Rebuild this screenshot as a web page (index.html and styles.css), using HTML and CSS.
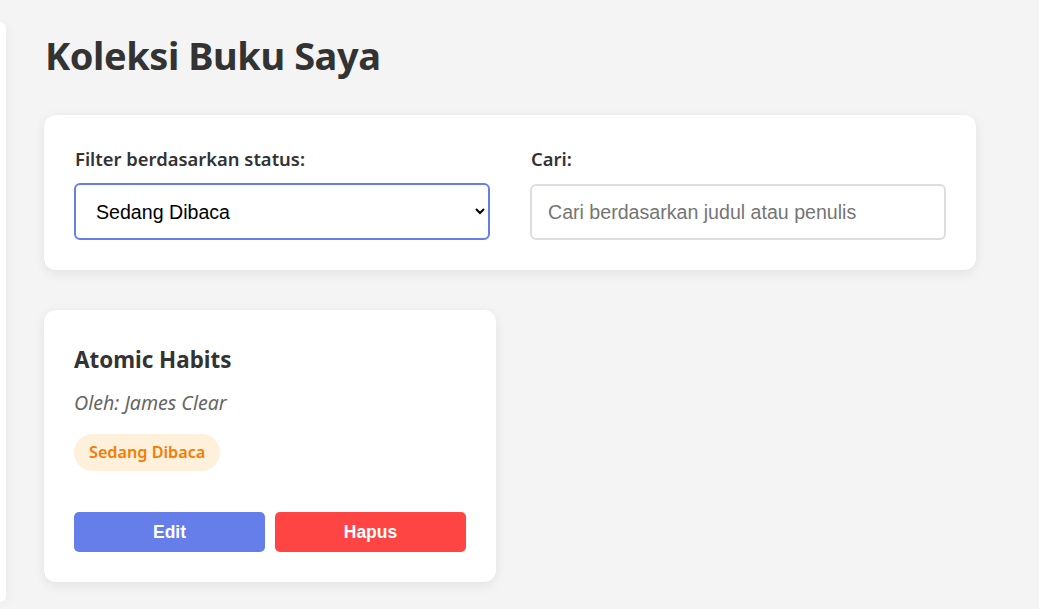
FILE: index.html
```html
<!DOCTYPE html>
<html lang="id">
<head>
<meta charset="utf-8">
<title>Koleksi Buku Saya</title>
<link rel="stylesheet" href="styles.css">
</head>
<body>
<div class="app">
  <aside class="sidebar"></aside>
  <main class="main">
    <h1 class="page-title">Koleksi Buku Saya</h1>
    <section class="filter-card">
      <div class="field">
        <label class="field-label" for="status">Filter berdasarkan status:</label>
        <select id="status" class="field-select">
          <option>Semua</option>
          <option selected>Sedang Dibaca</option>
          <option>Selesai</option>
        </select>
      </div>
      <div class="field">
        <label class="field-label" for="cari">Cari:</label>
        <input id="cari" class="field-input" type="text" placeholder="Cari berdasarkan judul atau penulis">
      </div>
    </section>
    <section class="book-grid">
      <article class="book-card">
        <h3 class="book-title">Atomic Habits</h3>
        <p class="book-author">Oleh: James Clear</p>
        <span class="badge badge-reading">Sedang Dibaca</span>
        <div class="book-actions">
          <button class="btn btn-edit">Edit</button>
          <button class="btn btn-delete">Hapus</button>
        </div>
      </article>
    </section>
  </main>
</div>
</body>
</html>
```
FILE: styles.css
```css
* { box-sizing: border-box; }

html, body {
  margin: 0;
  height: 100%;
  background: #f4f4f4;
  color: #333;
  font-family: "Noto Sans", "Open Sans", sans-serif;
}

.app {
  display: flex;
  height: 100%;
  overflow: hidden;
}

.sidebar {
  flex: 0 0 6px;
  margin: 22px 0 7px;
  background: #fff;
  border-radius: 0 12px 12px 0;
  box-shadow: 0 3px 12px rgba(0, 0, 0, 0.08);
}

.main {
  flex: 1;
  padding: 0 63px 0 38px;
}

.page-title {
  margin: 30px 0 35px 1px;
  font-size: 38px;
  font-weight: 700;
  letter-spacing: -0.45px;
  line-height: 50px;
  color: #333;
}

.filter-card {
  display: grid;
  grid-template-columns: 1fr 1fr;
  gap: 40px;
  background: #fff;
  border-radius: 12px;
  padding: 30px;
  box-shadow: 0 3px 12px rgba(0, 0, 0, 0.08);
  width: 932px;
}

.field {
  display: flex;
  flex-direction: column;
  gap: 10px;
}

.field-label {
  font-size: 18.4px;
  font-weight: 600;
  line-height: 28px;
  color: #333;
  padding-left: 1px;
}

.field-select,
.field-input {
  width: 100%;
  height: 57px;
  padding: 0 16px;
  border-radius: 6px;
  font-family: "Liberation Sans", Arial, sans-serif;
  font-size: 19.6px;
  background: #fff;
  color: #000;
  outline: none;
}

.field-select {
  border: 2px solid #667eea;
}

.field-input {
  border: 2px solid #ddd;
  height: 56px;
  margin-top: 1px;
}

.field-input::placeholder {
  color: #757575;
}

.book-grid {
  display: grid;
  grid-template-columns: 452px 452px;
  gap: 28px;
  margin-top: 40px;
}

.book-card {
  background: #fff;
  border-radius: 12px;
  padding: 30px;
  box-shadow: 0 3px 12px rgba(0, 0, 0, 0.08);
}

.book-title {
  margin: 5px 0 0;
  font-size: 22.4px;
  font-weight: 700;
  line-height: 30px;
  color: #333;
}

.book-author {
  margin: 15px 0 0;
  font-size: 19.6px;
  font-style: italic;
  color: #666;
  line-height: 26px;
}

.badge {
  display: block;
  width: fit-content;
  margin-top: 18px;
  padding: 7px 15px;
  border-radius: 20px;
  font-size: 16.2px;
  font-weight: 600;
  line-height: 23px;
}

.badge-reading {
  background: #fff0dc;
  color: #f57c00;
}

.book-actions {
  display: flex;
  gap: 10px;
  margin-top: 41px;
}

.btn {
  flex: 1;
  height: 40px;
  border: none;
  border-radius: 5px;
  color: #fff;
  font-family: "Liberation Sans", Arial, sans-serif;
  font-size: 17.5px;
  font-weight: 700;
}

.btn-edit { background: #667eea; }
.btn-delete { background: #ff4444; }
```
